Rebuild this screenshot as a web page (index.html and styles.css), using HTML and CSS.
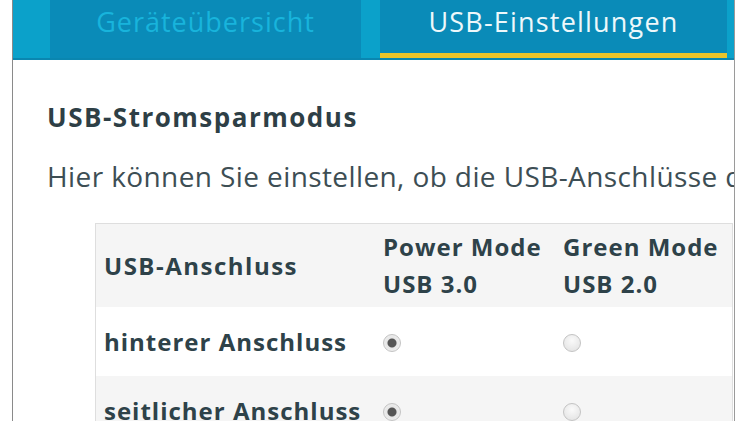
FILE: index.html
```html
<!DOCTYPE html>
<html lang="de">
<head>
<meta charset="utf-8">
<title>USB-Einstellungen</title>
<link rel="stylesheet" href="styles.css">
</head>
<body>
<div class="page">
  <div class="tabs">
    <div class="tab">Geräteübersicht</div>
    <div class="tab active">USB-Einstellungen</div>
  </div>
  <div class="content">
    <h2 class="title">USB-Stromsparmodus</h2>
    <p class="intro">Hier können Sie einstellen, ob die USB-Anschlüsse der FRITZ!Box im Power Mode oder im Green Mode betrieben werden.</p>
    <table class="ports">
      <tr class="head">
        <td class="c1">USB-Anschluss</td>
        <td class="c2">Power Mode<br>USB 3.0</td>
        <td class="c3">Green Mode<br>USB 2.0</td>
      </tr>
      <tr>
        <td class="c1">hinterer Anschluss</td>
        <td class="c2"><span class="radio on"></span></td>
        <td class="c3"><span class="radio"></span></td>
      </tr>
      <tr class="alt">
        <td class="c1">seitlicher Anschluss</td>
        <td class="c2"><span class="radio on"></span></td>
        <td class="c3"><span class="radio"></span></td>
      </tr>
    </table>
  </div>
</div>
</body>
</html>
```
FILE: styles.css
```css
html, body {
  margin: 0;
  padding: 0;
  background: #fff;
  height: 100%;
  overflow: hidden;
}
body {
  font-family: "Open Sans", Lato, sans-serif;
}
.page {
  margin-left: 12px;
  width: 721px;
  height: 421px;
  border-left: 1px solid #8a8a8a;
  border-right: 1px solid #9a9a9a;
  overflow: hidden;
}
.tabs {
  display: flex;
  height: 58px;
  background: #0ba1ca;
  border-bottom: 2px solid #0a86b0;
  padding-left: 37px;
  gap: 19px;
  box-sizing: content-box;
}
.tab {
  width: 311px;
  background: #0a8bb8;
  color: #18b4dc;
  font-size: 27px;
  letter-spacing: 1px;
  line-height: 44px;
  text-align: center;
  box-sizing: border-box;
}
.tab.active {
  width: 347px;
  color: #eef8fb;
  letter-spacing: 1.2px;
  border-bottom: 5px solid #ecc42a;
  height: 58px;
}
.content {
  padding-left: 34px;
  white-space: nowrap;
}
.title {
  margin: 0;
  padding-top: 41px;
  font-size: 26px;
  line-height: 32px;
  font-weight: 700;
  letter-spacing: 1.5px;
  color: #2e3f46;
}
.intro {
  margin: 0;
  padding-top: 26px;
  font-size: 28px;
  line-height: 34px;
  letter-spacing: 0.4px;
  color: #3d4e54;
}
.ports {
  margin-top: 30px;
  margin-left: 48px;
  width: 638px;
  border-collapse: collapse;
  border: 1px solid #dedede;
  border-bottom: none;
  color: #2e4249;
  font-size: 24px;
  font-weight: 700;
  letter-spacing: 1px;
}
.ports td {
  padding: 16px 10px 16px 8px;
  line-height: 37px;
  vertical-align: middle;
  text-align: left;
}
.ports tr.head td {
  padding-top: 4px;
  padding-bottom: 5px;
  background: #f5f5f5;
}
.ports tr.head td.c1 {
  letter-spacing: 1.5px;
}
.ports tr.alt td {
  background: #f5f5f5;
}
.c1 { width: 261px; }
.c2 { width: 162px; }
.radio {
  display: inline-block;
  width: 16px;
  height: 16px;
  border-radius: 50%;
  border: 1px solid #c4c4c4;
  background: radial-gradient(circle at 50% 35%, #fafafa 0%, #e0e0e0 100%);
  vertical-align: middle;
  position: relative;
  top: -2px;
  margin-left: 0;
  box-sizing: content-box;
}
.radio.on {
  background: radial-gradient(circle, #555 0, #555 4px, #e6e6e6 5px, #f4f4f4 100%);
}
```
